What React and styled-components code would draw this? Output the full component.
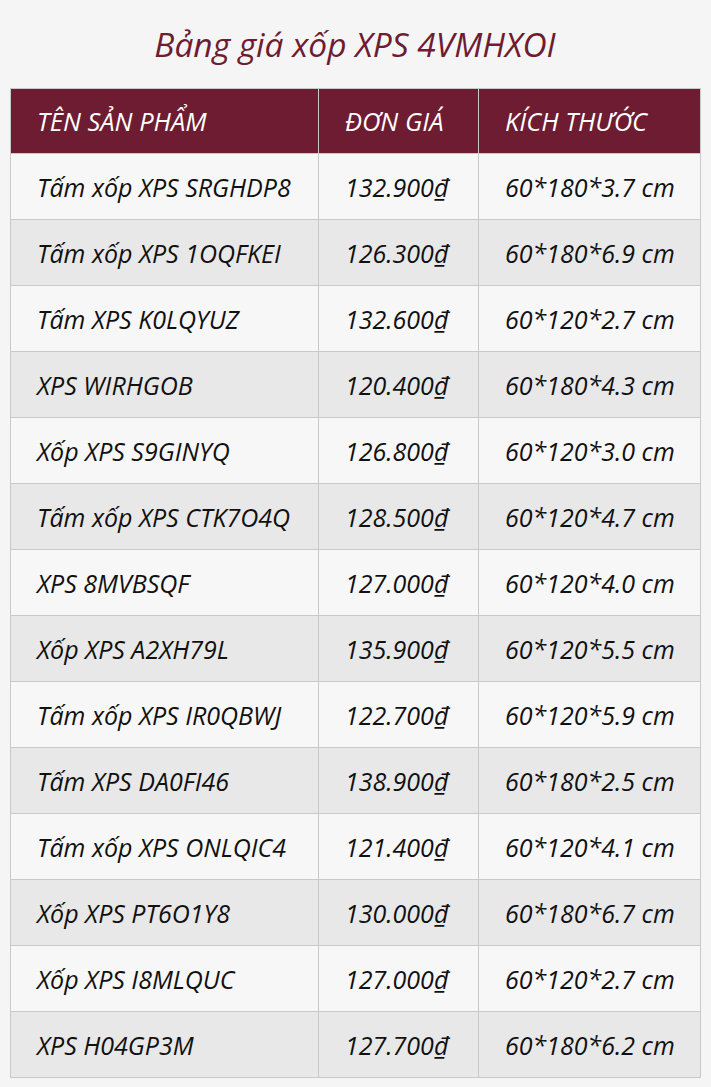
import React from "react";
import styled, { createGlobalStyle } from "styled-components";

const Global = createGlobalStyle`
  html, body { margin: 0; padding: 0; background: #f5f5f5; }
  body { font-family: "Open Sans", Lato, "Noto Sans", sans-serif; }
`;

const Page = styled.div`
  padding: 24px 11px 0 10px;
  display: flex;
  flex-direction: column;
  align-items: stretch;
`;

const Title = styled.h1`
  margin: 0 0 24px;
  height: 40px;
  text-align: center;
  font-weight: 400;
  font-style: italic;
  font-size: 33.5px;
  line-height: 40px;
  color: #6d1c31;
  white-space: nowrap;
`;

const Table = styled.table`
  width: 690px;
  border-collapse: collapse;
  table-layout: fixed;
`;

const HeadCell = styled.th`
  height: 64px;
  padding: 0 0 0 ${(p) => p.$pad}px;
  background: #6d1c31;
  color: #ffffff;
  border: 1px solid #c9c9c9;
  text-align: left;
  font-weight: 400;
  font-style: italic;
  font-size: 25.5px;
  white-space: nowrap;
`;

const Row = styled.tr`
  background: ${(p) => (p.$alt ? "#e8e8e8" : "#f7f7f7")};
`;

const Cell = styled.td`
  height: 65px;
  padding: 0 0 0 ${(p) => p.$pad}px;
  border: 1px solid #c9c9c9;
  color: #111111;
  font-style: italic;
  font-size: 25px;
  white-space: nowrap;
`;

const rows = [
  ["Tấm xốp XPS SRGHDP8", "132.900", "60*180*3.7 cm"],
  ["Tấm xốp XPS 1OQFKEI", "126.300", "60*180*6.9 cm"],
  ["Tấm XPS K0LQYUZ", "132.600", "60*120*2.7 cm"],
  ["XPS WIRHGOB", "120.400", "60*180*4.3 cm"],
  ["Xốp XPS S9GINYQ", "126.800", "60*120*3.0 cm"],
  ["Tấm xốp XPS CTK7O4Q", "128.500", "60*120*4.7 cm"],
  ["XPS 8MVBSQF", "127.000", "60*120*4.0 cm"],
  ["Xốp XPS A2XH79L", "135.900", "60*120*5.5 cm"],
  ["Tấm xốp XPS IR0QBWJ", "122.700", "60*120*5.9 cm"],
  ["Tấm XPS DA0FI46", "138.900", "60*180*2.5 cm"],
  ["Tấm xốp XPS ONLQIC4", "121.400", "60*120*4.1 cm"],
  ["Xốp XPS PT6O1Y8", "130.000", "60*180*6.7 cm"],
  ["Xốp XPS I8MLQUC", "127.000", "60*120*2.7 cm"],
  ["XPS H04GP3M", "127.700", "60*180*6.2 cm"],
];

export default function App() {
  return (
    <>
      <Global />
      <Page>
        <Title>Bảng giá xốp XPS 4VMHXOI</Title>
        <Table>
          <colgroup>
            <col style={{ width: 308 }} />
            <col style={{ width: 160 }} />
            <col style={{ width: 222 }} />
          </colgroup>
          <thead>
            <tr>
              <HeadCell $pad={26}>TÊN SẢN PHẨM</HeadCell>
              <HeadCell $pad={26}>ĐƠN GIÁ</HeadCell>
              <HeadCell $pad={26}>KÍCH THƯỚC</HeadCell>
            </tr>
          </thead>
          <tbody>
            {rows.map((r, i) => (
              <Row key={i} $alt={i % 2 === 1}>
                <Cell $pad={26}>{r[0]}</Cell>
                <Cell $pad={26}>{r[1]}₫</Cell>
                <Cell $pad={26}>{r[2]}</Cell>
              </Row>
            ))}
          </tbody>
        </Table>
      </Page>
    </>
  );
}
